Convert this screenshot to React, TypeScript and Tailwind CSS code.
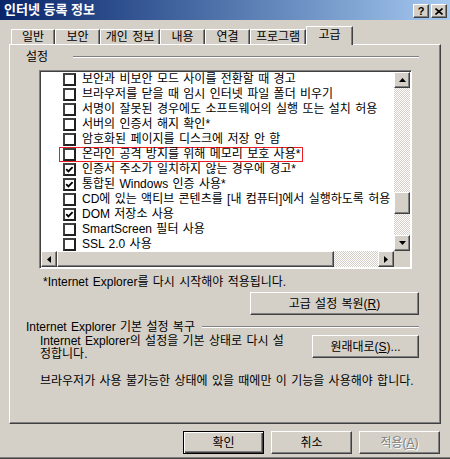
import React from "react";

const raised =
  "border border-t-white border-l-white border-r-[#404040] border-b-[#404040] shadow-[inset_-1px_-1px_#808080]";
const checker =
  "bg-[image:repeating-conic-gradient(#d4d0c8_0%_25%,#ffffff_0%_50%)] bg-[length:2px_2px]";

const items: [string, boolean, boolean?][] = [
  ["보안과 비보안 모드 사이를 전환할 때 경고", false],
  ["브라우저를 닫을 때 임시 인터넷 파일 폴더 비우기", false],
  ["서명이 잘못된 경우에도 소프트웨어의 실행 또는 설치 허용", false],
  ["서버의 인증서 해지 확인*", false],
  ["암호화된 페이지를 디스크에 저장 안 함", false],
  ["온라인 공격 방지를 위해 메모리 보호 사용*", false, true],
  ["인증서 주소가 일치하지 않는 경우에 경고*", true],
  ["통합된 Windows 인증 사용*", true],
  ["CD에 있는 액티브 콘텐츠를 [내 컴퓨터]에서 실행하도록 허용", false],
  ["DOM 저장소 사용", true],
  ["SmartScreen 필터 사용", false],
  ["SSL 2.0 사용", false],
];

const tabs = [
  { label: "일반", w: "w-[44px]" },
  { label: "보안", w: "w-[45px]" },
  { label: "개인 정보", w: "w-[60px]" },
  { label: "내용", w: "w-[45px]" },
  { label: "연결", w: "w-[45px]" },
  { label: "프로그램", w: "w-[56px]" },
];

function Arrow({ dir }: { dir: "up" | "down" | "left" | "right" }) {
  const pts = {
    up: "3.5,0 7,4 0,4",
    down: "0,0 7,0 3.5,4",
    left: "4,0 4,7 0,3.5",
    right: "0,0 4,3.5 0,7",
  }[dir];
  const vertical = dir === "up" || dir === "down";
  return (
    <svg width={vertical ? 7 : 4} height={vertical ? 4 : 7} viewBox={vertical ? "0 0 7 4" : "0 0 4 7"}>
      <polygon points={pts} fill="#000" />
    </svg>
  );
}

function ScrollBtn({ dir }: { dir: "up" | "down" | "left" | "right" }) {
  return (
    <div className={`${raised} h-[16px] w-[16px] shrink-0 bg-[#d4d0c8] flex items-center justify-center`}>
      <Arrow dir={dir} />
    </div>
  );
}

function Check({ on }: { on: boolean }) {
  return (
    <span className="flex h-[13px] w-[13px] shrink-0 items-center justify-center border-2 border-t-[#404040] border-l-[#404040] border-r-[#202020] border-b-[#202020] bg-white">
      {on && (
        <svg width="9" height="9" viewBox="0 0 9 9">
          <polyline points="1.2,4.2 3.4,6.4 7.6,2.2" fill="none" stroke="#000" strokeWidth="1.9" />
        </svg>
      )}
    </span>
  );
}

function Button({
  children,
  w,
  primary,
  disabled,
}: {
  children: React.ReactNode;
  w: string;
  primary?: boolean;
  disabled?: boolean;
}) {
  const edge = primary
    ? "border border-black shadow-[inset_1px_1px_#fff,inset_-1px_-1px_#404040,inset_-2px_-2px_#808080]"
    : raised;
  return (
    <div
      className={`${edge} ${w} flex h-[23px] shrink-0 items-center justify-center bg-[#d4d0c8] leading-[12px] ${
        disabled ? "text-[#808080] [text-shadow:1px_1px_0_#fff]" : "text-black"
      }`}
    >
      {children}
    </div>
  );
}

function Etched() {
  return <div className="h-[2px] flex-1 border-t border-t-[#808080] border-b border-b-white" />;
}

export default function App() {
  return (
    <div className="flex h-[459px] w-[450px] flex-col overflow-hidden bg-[#d4d0c8] font-['Liberation_Sans','Noto_Sans_CJK_KR',sans-serif] text-[12px] text-black [word-spacing:1px] shadow-[inset_0_-1px_#404040,inset_0_-2px_#808080]">
      {/* title bar */}
      <div className="flex h-[20px] shrink-0 items-start bg-linear-to-r from-[#0a246a] to-[#a6caf0] pl-[4px] pr-[3px]">
        <span className="mt-[2px] text-[13px] font-bold leading-[15px] text-white [word-spacing:0px]">인터넷 등록 정보</span>
        <div className="ml-auto mt-[4px] flex gap-[2px]">
          <div className={`${raised} flex h-[14px] w-[16px] items-center justify-center bg-[#d4d0c8] text-[11px] font-bold leading-[11px]`}>
            ?
          </div>
          <div className={`${raised} flex h-[14px] w-[16px] items-center justify-center bg-[#d4d0c8]`}>
            <svg width="8" height="7" viewBox="0 0 8 7">
              <path d="M0.5 0.5 L7.5 6.5 M7.5 0.5 L0.5 6.5" stroke="#000" strokeWidth="1.6" />
            </svg>
          </div>
        </div>
      </div>

      {/* tabs */}
      <div className="ml-[11px] mt-[6px] flex h-[18px] shrink-0 items-end">
        {tabs.map((t) => (
          <div
            key={t.label}
            className={`${t.w} flex h-[15px] items-start justify-center whitespace-nowrap border-t border-l border-t-white border-l-white border-r border-r-[#404040] pt-[1px] leading-[12px] shadow-[inset_-1px_0_#808080]`}
          >
            {t.label}
          </div>
        ))}
        <div className="relative z-10 -mb-[1px] flex h-[19px] w-[47px] items-start justify-center border-t border-l border-t-white border-l-white border-r border-r-[#404040] bg-[#d4d0c8] pt-[2px] leading-[12px] shadow-[inset_-1px_0_#808080]">
          고급
        </div>
      </div>

      {/* panel */}
      <div className={`${raised} ml-[9px] flex h-[380px] w-[432px] shrink-0 flex-col`}>
        <div className="mt-[6px] flex h-[12px] items-center pl-[16px] pr-[21px]">
          <span className="w-[47px] leading-[12px]">설정</span>
          <Etched />
        </div>

        {/* list */}
        <div className="ml-[29px] mt-[7px] flex h-[199px] w-[373px] flex-col border border-t-[#808080] border-l-[#808080] border-r-white border-b-white bg-white p-px shadow-[inset_1px_1px_#404040]">
          <div className="flex min-h-0 flex-1">
            <div className="min-w-0 flex-1 overflow-hidden">
              {items.map(([label, on, mark]) => (
                <div key={label} className="flex h-[15px] items-center pl-[18px]">
                  <div
                    className={`flex h-[15px] items-center whitespace-nowrap border pl-[3px] pr-[2px] ${
                      mark ? "border-[#ee1c25]" : "border-transparent"
                    }`}
                  >
                    <Check on={on} />
                    <span className="ml-[6px] leading-[13px]">{label}</span>
                  </div>
                </div>
              ))}
            </div>
            <div className="flex w-[16px] flex-col">
              <ScrollBtn dir="up" />
              <div className={`${checker} flex-1`}>
                <div className={`${raised} mt-[104px] h-[22px] bg-[#d4d0c8]`} />
              </div>
              <ScrollBtn dir="down" />
            </div>
          </div>
          <div className="flex h-[16px] shrink-0">
            <ScrollBtn dir="left" />
            <div className={`${raised} w-[277px] bg-[#d4d0c8]`} />
            <div className={`${checker} flex-1`} />
            <ScrollBtn dir="right" />
            <div className="w-[16px] bg-[#d4d0c8]" />
          </div>
        </div>

        <div className="ml-[33px] mt-[7px] h-[12px] whitespace-nowrap leading-[12px]">
          *Internet Explorer를 다시 시작해야 적용됩니다.
        </div>

        <div className="mr-[21px] mt-[4px] self-end">
          <Button w="w-[169px]">
            고급 설정 복원(<u className="underline-offset-1">R</u>)
          </Button>
        </div>

        <div className="mt-[6px] flex h-[12px] items-center pl-[16px] pr-[21px]">
          <span className="w-[176px] whitespace-nowrap leading-[12px]">Internet Explorer 기본 설정 복구</span>
          <Etched />
        </div>

        <div className="mt-[2px] flex h-[26px] items-start pl-[30px] pr-[21px]">
          <div className="whitespace-nowrap leading-[13px]">
            Internet Explorer의 설정을 기본 상태로 다시 설
            <br />
            정합니다.
          </div>
          <div className="ml-auto">
            <Button w="w-[107px]">
              원래대로(<u className="underline-offset-1">S</u>)...
            </Button>
          </div>
        </div>

        <div className="ml-[30px] mt-[14px] h-[12px] whitespace-nowrap leading-[12px]">
          브라우저가 사용 불가능한 상태에 있을 때에만 이 기능을 사용해야 합니다.
        </div>
      </div>

      {/* dialog buttons */}
      <div className="mt-[7px] flex justify-end gap-[7px] pr-[10px]">
        <Button w="w-[81px]" primary>
          확인
        </Button>
        <Button w="w-[81px]">취소</Button>
        <Button w="w-[81px]" disabled>
          적용(<u className="underline-offset-1">A</u>)
        </Button>
      </div>
    </div>
  );
}
